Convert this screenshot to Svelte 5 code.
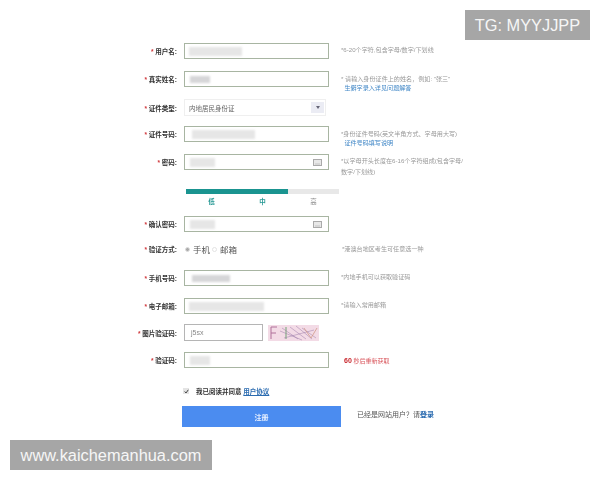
<script>
  const strengths = [
    { label: '低', tone: 'on' },
    { label: '中', tone: 'on' },
    { label: '高', tone: 'off' }
  ];
</script>

<div class="page">
  <div class="mark tg">TG: MYYJJPP</div>

  <form class="form" onsubmit={(e) => e.preventDefault()}>
    <div class="row r1">
      <span class="label"><i>*</i> 用户名:</span>
      <div class="input"><span class="red" style="width:53px;margin-left:4px"></span></div>
      <p class="hint h1">*6-20个字符,包含字母/数字/下划线</p>
    </div>

    <div class="row r2">
      <span class="label"><i>*</i> 真实姓名:</span>
      <div class="input"><span class="red dark" style="width:20px;margin-left:5px"></span></div>
      <p class="hint h2">* 请输入身份证件上的姓名，例如: "张三"<br /><a href="#a">&nbsp;&nbsp;生僻字录入详见问题解答</a></p>
    </div>

    <div class="row r3">
      <span class="label"><i>*</i> 证件类型:</span>
      <div class="select">
        <span>内地居民身份证</span>
        <b class="arrow"><svg width="4" height="3" viewBox="0 0 4 3"><path d="M0 0h4L2 3z" fill="#667" /></svg></b>
      </div>
    </div>

    <div class="row r4">
      <span class="label"><i>*</i> 证件号码:</span>
      <div class="input"><span class="red" style="width:63px;margin-left:7px"></span></div>
      <p class="hint h2">*身份证件号码(英文半角方式、字母用大写)<br /><a href="#a">&nbsp;&nbsp;证件号码填写说明</a></p>
    </div>

    <div class="row r5">
      <span class="label"><i>*</i> 密码:</span>
      <div class="input">
        <span class="red" style="width:25px;margin-left:5px"></span>
        <svg class="kbd" width="9" height="7" viewBox="0 0 9 7"><rect x=".5" y=".5" width="8" height="6" fill="#e8e8e8" stroke="#aaa" /><path d="M2 5h5" stroke="#c4c4c4" /></svg>
      </div>
      <p class="hint h3">*以字母开头长度在6-16个字符组成(包含字母/<br />数字/下划线)</p>
    </div>

    <div class="strength">
      <div class="track"><div class="fill" style="width:66.5%"></div></div>
      <div class="levels">
        {#each strengths as s}
          <span class={s.tone}>{s.label}</span>
        {/each}
      </div>
    </div>

    <div class="row r6">
      <span class="label"><i>*</i> 确认密码:</span>
      <div class="input">
        <span class="red" style="width:25px;margin-left:5px"></span>
        <svg class="kbd" width="9" height="7" viewBox="0 0 9 7"><rect x=".5" y=".5" width="8" height="6" fill="#e8e8e8" stroke="#aaa" /><path d="M2 5h5" stroke="#c4c4c4" /></svg>
      </div>
    </div>

    <div class="row r7">
      <span class="label"><i>*</i> 验证方式:</span>
      <div class="radios">
        <span class="dot sel"></span><span class="opt">手机</span>
        <span class="dot"></span><span class="opt">邮箱</span>
      </div>
      <p class="hint h4">*港澳台地区考生可任意选一种</p>
    </div>

    <div class="row r8">
      <span class="label"><i>*</i> 手机号码:</span>
      <div class="input"><span class="red dark" style="width:38px;margin-left:7px"></span></div>
      <p class="hint h1">*内地手机可以获取验证码</p>
    </div>

    <div class="row r9">
      <span class="label"><i>*</i> 电子邮箱:</span>
      <div class="input"><span class="red" style="width:75px;margin-left:4px"></span></div>
      <p class="hint h1">*请输入常用邮箱</p>
    </div>

    <div class="row r10">
      <span class="label"><i>*</i> 图片验证码:</span>
      <div class="input small"><span class="code">j5sx</span></div>
      <svg class="captcha" width="51" height="16" viewBox="0 0 51 16">
        <rect width="51" height="16" fill="#f3dbe6" />
        <path d="M3 14V2h6M3 8h5" stroke="#b0709a" stroke-width="1" fill="none" />
        <path d="M18 2v12" stroke="#86ad86" stroke-width="1.2" />
        <path d="M14 3l16 11M22 2l16 12M28 1l16 13M34 3l14 10M16 13L46 5M12 6l22 9" stroke="#9a7aa8" stroke-width=".5" fill="none" />
        <path d="M36 3l7 10 6-10" stroke="#d09a8a" stroke-width=".8" fill="none" />
      </svg>
    </div>

    <div class="row r11">
      <span class="label"><i>*</i> 验证码:</span>
      <div class="input"><span class="red" style="width:20px;margin-left:5px"></span></div>
      <p class="resend"><b>60</b> 秒后重新获取</p>
    </div>

    <div class="agree">
      <span class="check"><svg width="5" height="5" viewBox="0 0 5 5"><path d="M.7 2.5l1.3 1.5L4.3.8" stroke="#444" fill="none" /></svg></span>
      <span>我已阅读并同意 <a href="#a">用户协议</a></span>
    </div>

    <div class="submit">
      <button type="submit">注册</button>
      <span class="login">已经是网站用户？请<a href="#a">登录</a></span>
    </div>
  </form>

  <div class="mark site">www.kaichemanhua.com</div>
</div>

<style>
  :global(body) {
    margin: 0;
    background: #fff;
  }
  .page {
    position: relative;
    width: 600px;
    height: 480px;
    overflow: hidden;
    background: #fff;
    font-family: "Liberation Sans", "Noto Sans CJK SC", sans-serif;
  }
  .mark {
    position: absolute;
    background: #a6a6a6;
    color: #f6f6f6;
    display: flex;
    align-items: center;
    justify-content: center;
    font-size: 16.35px;
    white-space: nowrap;
  }
  .tg {
    left: 465px;
    top: 10px;
    width: 125px;
    height: 30px;
  }
  .site {
    left: 10px;
    top: 440px;
    width: 202px;
    height: 30px;
  }
  .form {
    padding-top: 43px;
    display: flex;
    flex-direction: column;
    filter: blur(0.45px);
  }
  .row {
    display: flex;
    height: 16px;
    align-items: center;
    position: relative;
  }
  .r2 { margin-top: 12px; }
  .r3 { height: 17px; margin-top: 12px; }
  .r4 { margin-top: 10px; }
  .r5 { margin-top: 12px; }
  .r6 { margin-top: 10px; }
  .r7 { margin-top: 9px; }
  .r8 { margin-top: 13px; }
  .r9 { margin-top: 12px; }
  .r10 { height: 17px; margin-top: 10px; }
  .r11 { margin-top: 11px; }
  .label {
    width: 177px;
    flex: none;
    margin-right: 7px;
    text-align: right;
    font-size: 6.5px;
    font-weight: 700;
    color: #333;
    white-space: nowrap;
  }
  .label i {
    color: #d0383c;
    font-style: normal;
  }
  .input {
    width: 145px;
    height: 16px;
    flex: none;
    box-sizing: border-box;
    border: 1px solid #a8b5a2;
    display: flex;
    align-items: center;
    background: #fff;
  }
  .input.small {
    width: 79px;
    height: 17px;
    border-color: #b5b5b5;
  }
  .code {
    margin-left: 6px;
    font-size: 7px;
    color: #888;
  }
  .red {
    display: block;
    height: 9px;
    background: #e6e6e6;
    filter: blur(0.8px);
  }
  .red.dark {
    background: #d6d6d8;
    height: 7px;
  }
  .kbd {
    margin-left: auto;
    margin-right: 6px;
  }
  .select {
    width: 142px;
    height: 17px;
    flex: none;
    box-sizing: border-box;
    border: 1px solid #efefef;
    display: flex;
    align-items: center;
    justify-content: space-between;
    padding: 0 1px 0 4px;
    font-size: 6.5px;
    color: #666;
  }
  .arrow {
    width: 13px;
    height: 11px;
    background: #ebecf4;
    display: flex;
    align-items: center;
    justify-content: center;
  }
  .hint {
    margin: 0 0 0 12px;
    font-size: 6.1px;
    color: #999;
    white-space: nowrap;
    align-self: flex-start;
  }
  .h1 { padding-top: 3px; line-height: 8px; }
  .h2 { line-height: 9px; padding-top: 3px; }
  .h3 { line-height: 11px; padding-top: 1px; }
  .h4 { padding-top: 4px; line-height: 8px; }
  .hint a {
    color: #3f86c6;
    text-decoration: none;
  }
  .strength {
    margin: 19px 0 0 186px;
    width: 153px;
  }
  .track {
    height: 5px;
    background: #e8e8e8;
  }
  .fill {
    height: 100%;
    background: #1a9490;
  }
  .levels {
    display: grid;
    grid-template-columns: repeat(3, 51px);
    justify-items: center;
    margin-top: 4px;
    font-size: 6.5px;
    line-height: 8px;
    font-weight: 700;
  }
  .levels .on { color: #2a9a96; }
  .levels .off { color: #888; font-weight: 400; }
  .radios {
    display: flex;
    align-items: center;
    padding-left: 1px;
    width: 145px;
    flex: none;
    height: 16px;
    color: #555;
    font-size: 8.5px;
  }
  .dot {
    width: 5px;
    height: 5px;
    box-sizing: border-box;
    border: 1px solid #e2e2e2;
    border-radius: 50%;
    margin-right: 3px;
  }
  .dot.sel {
    background: #aaa;
    border-color: #ddd;
  }
  .opt { margin-right: 2px; }
  .captcha {
    margin-left: 5px;
    flex: none;
  }
  .resend {
    margin: 0 0 0 15px;
    font-size: 6px;
    color: #d8545a;
    white-space: nowrap;
  }
  .resend b {
    color: #c8262c;
    font-size: 7px;
  }
  .agree {
    margin: 17px 0 0 182px;
    height: 12px;
    display: flex;
    align-items: center;
    gap: 7px;
    font-size: 6.5px;
    font-weight: 700;
    color: #333;
  }
  .check {
    width: 6px;
    height: 6px;
    background: #e4e4e4;
    display: flex;
    align-items: center;
    justify-content: center;
    margin-left: 1px;
  }
  .agree a {
    color: #2a6bb0;
  }
  .submit {
    margin: 9px 0 0 182px;
    display: flex;
    align-items: center;
    gap: 16px;
  }
  button {
    width: 159px;
    height: 21px;
    border: 0;
    padding: 0;
    background: #4b8cf0;
    color: #e8f0ff;
    font: 700 7px "Liberation Sans", "Noto Sans CJK SC", sans-serif;
  }
  .login {
    font-size: 7px;
    color: #555;
    margin-top: -6px;
  }
  .login a {
    color: #2a6bb0;
    font-weight: 700;
    text-decoration: none;
  }
</style>
